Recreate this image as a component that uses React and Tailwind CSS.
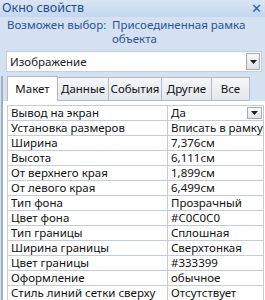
const rows = [
  ['Вывод на экран', 'Да', true],
  ['Установка размеров', 'Вписать в рамку'],
  ['Ширина', '7,376см'],
  ['Высота', '6,111см'],
  ['От верхнего края', '1,899см'],
  ['От левого края', '6,499см'],
  ['Тип фона', 'Прозрачный'],
  ['Цвет фона', '#C0C0C0'],
  ['Тип границы', 'Сплошная'],
  ['Ширина границы', 'Сверхтонкая'],
  ['Цвет границы', '#333399'],
  ['Оформление', 'обычное'],
  ['Стиль линий сетки сверху', 'Отсутствует'],
]

const tabs = [
  ['Макет', 'w-[51px]'],
  ['Данные', 'w-[51px]'],
  ['События', 'w-[53px]'],
  ['Другие', 'w-[50px]'],
  ['Все', 'w-[38px]'],
]

function DropButton({ className }) {
  return (
    <div className={`flex items-center justify-center border border-[#a7abb0] bg-gradient-to-b from-[#f7f8f9] to-[#dfe3e8] ${className}`}>
      <svg width="7" height="4" viewBox="0 0 7 4">
        <path d="M0 0h7L3.5 4z" fill="#1e1e1e" />
      </svg>
    </div>
  )
}

export default function App() {
  return (
    <div className="w-[265px] h-[300px] overflow-hidden bg-[#d3e1f3] font-['Noto_Sans',sans-serif] text-[11.5px] leading-none whitespace-nowrap">
      {/* заголовок */}
      <div className="h-[17px] flex items-center justify-between pl-[2px] pr-[3px] bg-gradient-to-b from-[#d9e6f6] to-[#c3d7ef]">
        <span className="text-[12.5px] text-[#1f4e8c]">Окно свойств</span>
        <span className="text-[13px] text-[#2a5ea6]">✕</span>
      </div>

      <div className="flex pl-[7px] pt-[1px] text-[#2a5490] leading-[14px]">
        <div className="w-[103px] shrink-0">Возможен выбор:</div>
        <div className="pl-[2px]">Присоединенная рамка<br />объекта</div>
      </div>

      <div className="mt-[5px] ml-[6px] mr-[3px] h-[21px] bg-white border border-[#c3cfdd] flex items-center justify-between pl-[3px] pr-[1px]">
        <span className="text-[#222]">Изображение</span>
        <DropButton className="w-[14px] h-[17px]" />
      </div>

      <div className="border-l-[2px] border-[#9fb1c8] ml-[1px] mt-[4px]">
        <div className="flex h-[25px] items-end pl-[4px]">
          {tabs.map(([t, w], i) => (
            <div
              key={t}
              className={
                i === 0
                  ? `${w} h-[25px] flex items-center justify-center bg-white border border-b-0 border-[#b3bac4] text-[#111]`
                  : `${w} h-[24px] flex items-center justify-center bg-gradient-to-b from-[#f6f7f9] to-[#e3e6eb] border border-l-0 border-[#b3bac4] text-[#111]`
              }
            >
              {t}
            </div>
          ))}
        </div>
        <div className="bg-white pt-[4px] pl-[4px] pr-[1px]">
          <div className="border-t border-l border-[#c6ccd3]">
            {rows.map(([k, v, drop]) => (
              <div key={k} className="flex h-[15px] border-b border-[#c6ccd3] text-[#111]">
                <div className="w-[160px] shrink-0 pl-[3px] flex items-center border-r border-[#c6ccd3]">{k}</div>
                <div className="flex-1 min-w-0 pl-[3px] flex items-center justify-between border-r border-[#c6ccd3] overflow-hidden">
                  <span>{v}</span>
                  {drop && <DropButton className="w-[15px] h-[12px] mr-[1px]" />}
                </div>
              </div>
            ))}
          </div>
        </div>
      </div>
    </div>
  )
}
